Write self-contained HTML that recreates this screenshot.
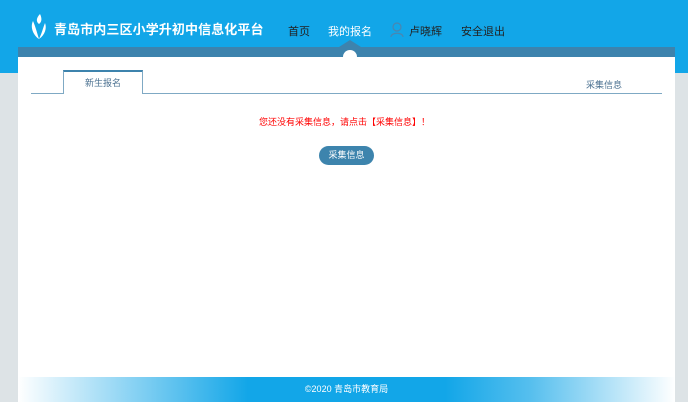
<!DOCTYPE html>
<html><head><meta charset="utf-8"><style>
*{margin:0;padding:0;box-sizing:border-box}
body{width:688px;height:402px;overflow:hidden;background:#dde3e6;font-family:"Liberation Sans","Noto Sans CJK SC",sans-serif;position:relative}
.hdr{position:absolute;left:0;top:0;width:688px;height:73px;background:#12a6e8}
.bar{position:absolute;left:18px;top:47px;width:657px;height:10px;background:#3d83ad}
.panel{position:absolute;left:18px;top:57px;width:657px;height:320px;background:#fff}
.title{position:absolute;left:54px;top:19px;color:#fff;font-size:13px;font-weight:bold;letter-spacing:0.1px}
.nav{position:absolute;top:23px;font-size:11px;color:#222}
.foot{position:absolute;left:18px;top:377px;width:657px;height:25px;background:linear-gradient(90deg,#fff 0%,#56bfee 25%,#12a6e8 35%,#12a6e8 65%,#56bfee 78%,#fff 100%);color:#fff;font-size:9px;text-align:center;line-height:25px}
</style></head><body>
<div class="hdr"></div>
<svg style="position:absolute;left:30px;top:13px" width="18" height="28" viewBox="0 0 18 28"><path d="M10 1 C6 5 6 9 9 11 C12 9 12 5 10 1Z" fill="#fff"/><path d="M3 8 C0 14 3 22 9 26 C7 20 6 15 3 8Z" fill="#fff"/><path d="M15 10 C17 15 15 22 9 26 C12 20 13 15 15 10Z" fill="#fff"/></svg>
<div class="title">青岛市内三区小学升初中信息化平台</div>
<div class="nav" style="left:288px">首页</div>
<div class="nav" style="left:328px;color:#fff">我的报名</div>
<svg style="position:absolute;left:390px;top:22px" width="14" height="15" viewBox="0 0 14 15"><circle cx="7" cy="5" r="4" fill="none" stroke="#4a86b0" stroke-width="1.2"/><path d="M1 15 C1 10 13 10 13 15" fill="none" stroke="#4a86b0" stroke-width="1.2"/></svg>
<div class="nav" style="left:409px">卢晓辉</div>
<div class="nav" style="left:461px">安全退出</div>
<div class="bar"></div>
<svg style="position:absolute;left:339px;top:40px" width="22" height="18"><path d="M0 7 L11 0 L22 7Z" fill="#3d83ad"/><path d="M4 17 A7 7 0 0 1 18 17Z" fill="#fff"/></svg>
<div class="panel"></div>
<div style="position:absolute;left:31px;top:93px;width:631px;height:1px;background:#7fa9c4"></div>
<div style="position:absolute;left:63px;top:70px;width:80px;height:24px;background:#fff;border:1px solid #7fa9c4;border-top:2px solid #3d83ad;border-bottom:none;font-size:9px;color:#4a7090;text-align:center;line-height:22px">新生报名</div>
<div style="position:absolute;left:586px;top:78px;font-size:9px;color:#4a7090">采集信息</div>
<div style="position:absolute;left:259px;top:115px;font-size:9px;color:#f00">您还没有采集信息，请点击【采集信息】！</div>
<div style="position:absolute;left:319px;top:146px;width:55px;height:19px;border-radius:10px;background:#3d84ad;color:#fff;font-size:9px;text-align:center;line-height:19px">采集信息</div>
<div class="foot">©2020 青岛市教育局</div>
</body></html>
